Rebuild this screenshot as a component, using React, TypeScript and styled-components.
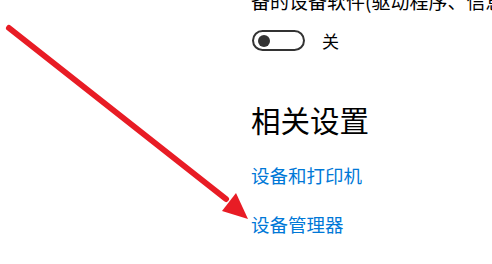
import React from 'react';
import styled, { createGlobalStyle } from 'styled-components';

const GlobalStyle = createGlobalStyle`
  html, body {
    margin: 0;
    padding: 0;
    background: #ffffff;
    overflow: hidden;
  }
  body {
    font-family: "Noto Sans CJK SC", "Noto Sans", sans-serif;
  }
`;

const App = () => {
  return (
    <Page>
      <GlobalStyle />

      <Content>
        <Description>备的设备软件(驱动程序、信息和图标)</Description>

        <ToggleRow>
          <Toggle aria-label="toggle">
            <Knob />
          </Toggle>
          <ToggleLabel>关</ToggleLabel>
        </ToggleRow>

        <SectionTitle>相关设置</SectionTitle>

        <LinkList>
          <SettingLink href="#">设备和打印机</SettingLink>
          <SettingLink href="#">设备管理器</SettingLink>
        </LinkList>
      </Content>

      <ArrowOverlay width="492" height="264" viewBox="0 0 492 264">
        <line x1="9" y1="28" x2="226" y2="199" stroke="#e81c25" strokeWidth="6" strokeLinecap="round" />
        <polygon points="222,211 236,193 248,219" fill="#e81c25" />
      </ArrowOverlay>
    </Page>
  );
}
export default App

const Page = styled.div`
  position: relative;
  width: 492px;
  height: 264px;
  overflow: hidden;
  background: #ffffff;
`;
const Content = styled.div`
  display: flex;
  flex-direction: column;
  align-items: flex-start;
  padding-left: 251px;
`;
const Description = styled.div`
  margin-top: -12px;
  font-size: 19px;
  line-height: 26px;
  color: #000000;
  white-space: nowrap;
`;
const ToggleRow = styled.div`
  display: flex;
  align-items: center;
  gap: 17px;
  margin-top: 16px;
  margin-left: 1px;
`;
const Toggle = styled.div`
  box-sizing: border-box;
  width: 53px;
  height: 21px;
  border: 2px solid #333333;
  border-radius: 11px;
  display: flex;
  align-items: center;
  padding-left: 4px;
`;
const Knob = styled.span`
  width: 12px;
  height: 12px;
  border-radius: 50%;
  background: #333333;
`;
const ToggleLabel = styled.span`
  font-size: 17px;
  line-height: 21px;
  color: #000000;
`;
const SectionTitle = styled.h2`
  margin: 48px 0 0;
  font-size: 29.5px;
  font-weight: 400;
  line-height: 40px;
  color: #000000;
`;
const LinkList = styled.div`
  display: flex;
  flex-direction: column;
  gap: 23px;
  margin-top: 23px;
`;
const SettingLink = styled.a`
  font-size: 18.5px;
  line-height: 26px;
  color: #0078d7;
  text-decoration: none;
`;
const ArrowOverlay = styled.svg`
  position: absolute;
  top: 0;
  left: 0;
  pointer-events: none;
`;
